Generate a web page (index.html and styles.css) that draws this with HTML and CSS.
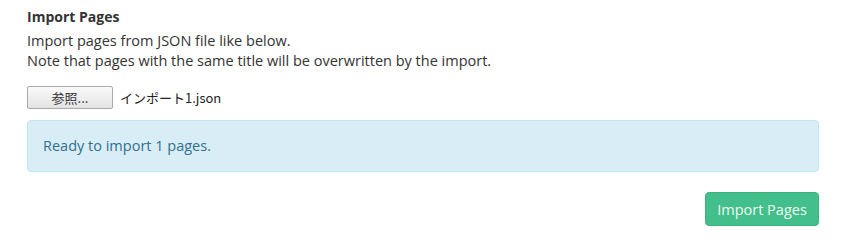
FILE: index.html
```html
<!DOCTYPE html>
<html>
<head>
<meta charset="utf-8">
<link rel="stylesheet" href="styles.css">
</head>
<body>
<div class="panel">
  <h4 class="title">Import Pages</h4>
  <p class="desc">Import pages from JSON file like below.<br>Note that pages with the same title will be overwritten by the import.</p>
  <div class="file-row">
    <span class="file-btn">参照...</span>
    <span class="file-name">インポート1.json</span>
  </div>
  <div class="alert">Ready to import 1 pages.</div>
  <div class="actions">
    <button class="btn-import">Import Pages</button>
  </div>
</div>
</body>
</html>
```

FILE: styles.css
```css
html, body {
  margin: 0;
  padding: 0;
  background: #fff;
}
.panel {
  padding: 8px 27px 0 27px;
  font-family: "Open Sans", "Noto Sans CJK JP", sans-serif;
  font-size: 14.5px;
  color: #333;
}
.title {
  margin: 0;
  font-size: 14px;
  font-weight: 700;
  line-height: 18px;
  color: #333;
}
.desc {
  margin: 5px 0 0 0;
  line-height: 20px;
}
.file-row {
  display: flex;
  align-items: center;
  margin-top: 15px;
  height: 23px;
}
.file-btn {
  box-sizing: border-box;
  width: 86px;
  height: 23px;
  display: flex;
  align-items: center;
  justify-content: center;
  border: 1px solid #a9a9a9;
  border-radius: 2px;
  background: linear-gradient(#fafafa, #e3e3e3);
  font-family: "Noto Sans CJK JP", sans-serif;
  font-size: 13px;
  color: #333;
}
.file-name {
  margin-left: 7px;
  font-family: "Noto Sans CJK JP", sans-serif;
  font-size: 13px;
  color: #222;
}
.alert {
  margin-top: 11px;
  padding: 15px;
  line-height: 20px;
  border: 1px solid #bce8f1;
  border-radius: 4px;
  background: #d9edf7;
  color: #31708f;
}
.actions {
  display: flex;
  justify-content: flex-end;
  margin-top: 20px;
}
.btn-import {
  box-sizing: border-box;
  width: 114px;
  height: 34px;
  border: 1px solid #3cb37f;
  border-radius: 4px;
  background: #42bf8a;
  color: #f0fbf3;
  font-family: "Open Sans", sans-serif;
  font-size: 14.5px;
  padding: 0;
}
```
